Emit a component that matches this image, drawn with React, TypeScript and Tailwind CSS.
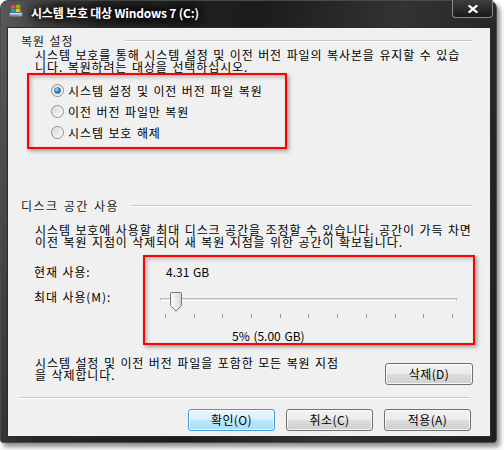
import React from "react";

function Radio({ checked }: { checked?: boolean }) {
  return (
    <svg width="13" height="13" viewBox="0 0 13 13" className="shrink-0">
      <defs>
        <linearGradient id="rbg" x1="0" y1="0" x2="1" y2="1">
          <stop offset="0" stopColor="#d0d0d0" />
          <stop offset="1" stopColor="#ffffff" />
        </linearGradient>
        <radialGradient id="rdot" cx="0.4" cy="0.35" r="0.75">
          <stop offset="0" stopColor="#b4e4ff" />
          <stop offset="0.45" stopColor="#2f8fd6" />
          <stop offset="1" stopColor="#0b437d" />
        </radialGradient>
      </defs>
      <circle cx="6.5" cy="6.5" r="6" fill="url(#rbg)" stroke="#8f8f8f" strokeWidth="1" />
      <circle cx="6.5" cy="6.5" r="4.6" fill="none" stroke="#f4f4f4" strokeWidth="0.8" />
      {checked && <circle cx="6.5" cy="6.5" r="3.3" fill="url(#rdot)" />}
    </svg>
  );
}

function Btn({ children, def, w }: { children: React.ReactNode; def?: boolean; w: string }) {
  return (
    <div
      className={
        def
          ? `${w} h-[22px] flex items-center justify-center rounded-[3px] border border-[#3c9bd8] bg-[linear-gradient(#e9f6fd_0%,#d8effc_50%,#bee6fd_50%,#a9dbf6_100%)] shadow-[inset_0_0_0_1px_rgba(255,255,255,0.85)]`
          : `${w} h-[22px] flex items-center justify-center rounded-[3px] border border-[#707070] bg-[linear-gradient(#f2f2f2_0%,#ebebeb_50%,#dddddd_50%,#cfcfcf_100%)] shadow-[inset_0_0_0_1px_rgba(255,255,255,0.8)]`
      }
    >
      <span className="leading-[12px] tracking-[0.4px]">{children}</span>
    </div>
  );
}

function TitleIcon() {
  return (
    <svg width="16" height="16" viewBox="0 0 16 16">
      <rect x="1" y="9" width="14" height="5" rx="1" fill="#7a8fa8" stroke="#3b4c63" strokeWidth="0.8" />
      <rect x="2" y="10" width="12" height="1.5" fill="#c7d5e6" />
      <rect x="11" y="12" width="2" height="1" fill="#6fe06f" />
      <path d="M3 2.5 L7.3 2 L7.3 5.3 L3 5.6 Z" fill="#f25022" />
      <path d="M7.9 2 L12.3 1.4 L12.3 4.9 L7.9 5.3 Z" fill="#7fba00" />
      <path d="M3 6.1 L7.3 5.8 L7.3 9 L3 9 Z" fill="#00a4ef" />
      <path d="M7.9 5.8 L12.3 5.4 L12.3 9 L7.9 9 Z" fill="#ffb900" />
    </svg>
  );
}

export default function App() {
  return (
    <div className="w-[504px] h-[450px] bg-white relative overflow-hidden font-['Noto_Sans_CJK_KR','Noto_Sans',sans-serif]">
      <div className="w-[497px] h-[443px] rounded-t-[8px] rounded-b-[3px] border border-[#4a4a4a] bg-[linear-gradient(100deg,#5a5a5a_0%,#2a2a2a_18%,#1b1b1b_45%,#333333_70%,#1e1e1e_100%)] shadow-[3px_4px_5px_rgba(0,0,0,0.45)] flex flex-col">
        {/* title bar */}
        <div className="h-[27px] flex items-start">
          <div className="ml-[7px] mt-[2px]">
            <TitleIcon />
          </div>
          <div className="ml-[7px] mt-[4px] text-white text-[12px] font-bold leading-[16px] tracking-[-0.2px] whitespace-nowrap [text-shadow:0_0_6px_#000,0_0_10px_#000,0_0_14px_#000]">
            시스템 보호 대상 Windows 7 (C:)
          </div>
          <div className="flex-1" />
          <div className="mr-[3px] -mt-px w-[41px] h-[18px] rounded-b-[4px] border border-t-0 border-[#8a8a8a] bg-[linear-gradient(#3e3e3e,#1a1a1a)] flex items-center justify-center">
            <svg width="10" height="8" viewBox="0 0 10 8">
              <path d="M1.5 1 L8.5 7 M8.5 1 L1.5 7" stroke="#ffffff" strokeWidth="2.2" strokeLinecap="square" />
            </svg>
          </div>
        </div>

        {/* content */}
        <div className="relative ml-[7px] w-[482px] h-[408px] bg-[#f0f0f0] shadow-[0_0_0_1px_#2c2c2c] text-[12px] text-black tracking-[0.9px] [word-spacing:1px] flex flex-col">
          {/* group 1 header */}
          <div className="h-[21px] pt-[4px] flex items-center">
            <span className="ml-[13px] w-[104px] leading-[16px] text-[#1a1a1a] whitespace-nowrap">복원 설정</span>
            <div className="flex-1 mr-[18px] h-px bg-[#c6c6c6] shadow-[0_1px_0_#ffffff]" />
          </div>
          <div className="pl-[27px] leading-[12px] whitespace-nowrap">
            <div className="h-[12px]">시스템 보호를 통해 시스템 설정 및 이전 버전 파일의 복사본을 유지할 수 있습</div>
            <div className="h-[12px]">니다. 복원하려는 대상을 선택하십시오.</div>
          </div>
          <div className="mt-[7px] flex flex-col">
            <div className="h-[21px] flex items-center pl-[43px] gap-[4px]">
              <Radio checked />
              <span>시스템 설정 및 이전 버전 파일 복원</span>
            </div>
            <div className="h-[21px] flex items-center pl-[43px] gap-[4px]">
              <Radio />
              <span>이전 버전 파일만 복원</span>
            </div>
            <div className="h-[21px] flex items-center pl-[43px] gap-[4px]">
              <Radio />
              <span>시스템 보호 해제</span>
            </div>
          </div>

          {/* group 2 header */}
          <div className="mt-[50px] h-[21px] pt-[4px] flex items-center">
            <span className="ml-[13px] w-[111px] leading-[16px] text-[#1a1a1a] tracking-[1.5px] whitespace-nowrap">디스크 공간 사용</span>
            <div className="flex-1 mr-[18px] h-px bg-[#c6c6c6] shadow-[0_1px_0_#ffffff]" />
          </div>
          <div className="mt-[10px] pl-[27px] leading-[12px] whitespace-nowrap">
            <div className="h-[12px]">시스템 보호에 사용할 최대 디스크 공간을 조정할 수 있습니다. 공간이 가득 차면</div>
            <div className="h-[12px]">이전 복원 지점이 삭제되어 새 복원 지점을 위한 공간이 확보됩니다.</div>
          </div>

          <div className="mt-[14px] grid grid-cols-[126px_297px] pl-[26px]">
            <div className="flex flex-col">
              <div className="h-[20px] flex items-center">현재 사용:</div>
              <div className="mt-[5px] h-[20px] flex items-center">최대 사용(M):</div>
            </div>
            <div className="flex flex-col tracking-normal">
              <div className="h-[20px] flex items-center pl-[6px]">4.31 GB</div>
              <div className="mt-[5px] relative h-[40px]">
                <div className="absolute left-0 right-0 top-[11px] h-[3px] border border-[#bcbcbc] border-b-white bg-[#e3e3e3]" />
                <div className="absolute left-[10px] top-[5px]">
                  <svg width="12" height="20" viewBox="0 0 12 20">
                    <defs>
                      <linearGradient id="thumb" x1="0" y1="0" x2="1" y2="0">
                        <stop offset="0" stopColor="#fbfbfb" />
                        <stop offset="0.5" stopColor="#ececec" />
                        <stop offset="1" stopColor="#d2d2d2" />
                      </linearGradient>
                    </defs>
                    <path d="M1.5 0.5 H10.5 Q11.5 0.5 11.5 1.5 V13.5 L6 19.2 L0.5 13.5 V1.5 Q0.5 0.5 1.5 0.5 Z" fill="url(#thumb)" stroke="#767676" strokeWidth="1" />
                  </svg>
                </div>
                <div className="absolute left-[5px] right-[4px] top-[27px] flex justify-between">
                  {Array.from({ length: 11 }).map((_, i) => (
                    <div key={i} className="w-px h-[4px] bg-[#9a9a9a]" />
                  ))}
                </div>
              </div>
              <div className="mt-[3px] pl-[72px] leading-[12px] h-[12px]">5% (5.00 GB)</div>
            </div>
          </div>

          <div className="mt-[15px] flex items-start">
            <div className="pl-[27px] leading-[12px] whitespace-nowrap">
              <div className="h-[12px]">시스템 설정 및 이전 버전 파일을 포함한 모든 복원 지점</div>
              <div className="h-[12px]">을 삭제합니다.</div>
            </div>
            <div className="flex-1" />
            <div className="mt-[6px] mr-[17px]">
              <Btn w="w-[88px]">삭제(D)</Btn>
            </div>
          </div>

          <div className="mt-[12px] ml-[12px] w-[450px] h-px bg-[#c8c8c8] shadow-[0_1px_0_#ffffff]" />

          <div className="mt-[11px] flex justify-end gap-[11px] pr-[19px]">
            <Btn def w="w-[87px]">확인(O)</Btn>
            <Btn w="w-[87px]">취소(C)</Btn>
            <Btn w="w-[87px]">적용(A)</Btn>
          </div>

          {/* annotation boxes */}
          <div className="absolute left-[19px] top-[45px] w-[260px] h-[76px] border-2 border-[#ff0000] shadow-[2px_2px_4px_rgba(0,0,0,0.35),inset_2px_2px_4px_rgba(0,0,0,0.25)]" />
          <div className="absolute left-[135px] top-[227px] w-[332px] h-[90px] border-2 border-[#ff0000] shadow-[2px_2px_4px_rgba(0,0,0,0.35),inset_2px_2px_4px_rgba(0,0,0,0.25)]" />
        </div>
      </div>
    </div>
  );
}
